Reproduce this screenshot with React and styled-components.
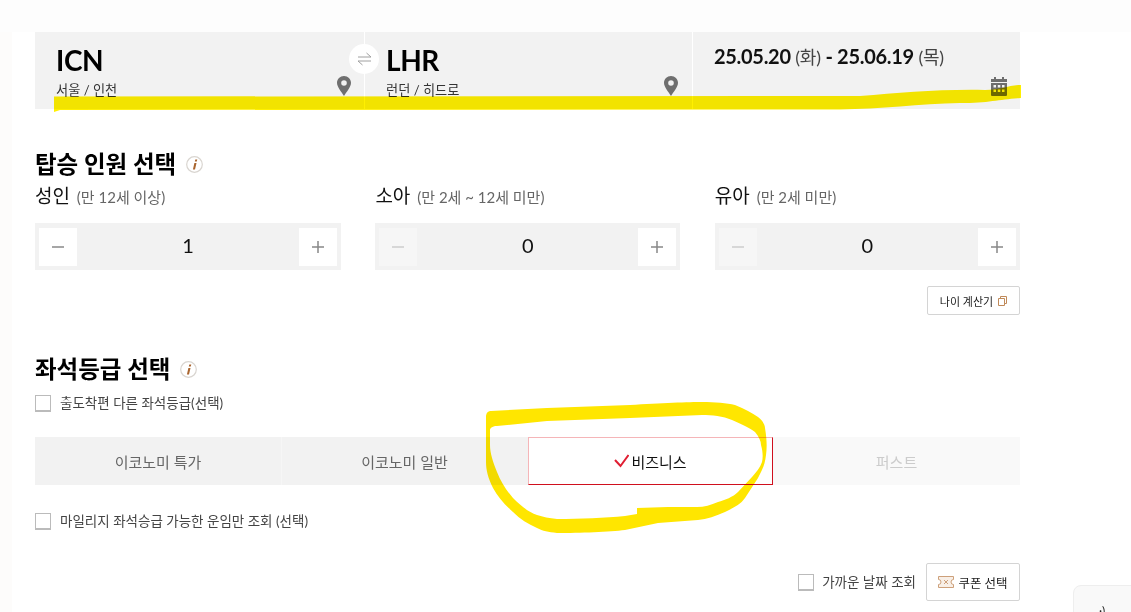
import React from "react";
import styled, { createGlobalStyle } from "styled-components";

const Global = createGlobalStyle`
  html, body { margin: 0; padding: 0; background: #fff; }
  body { font-family: Lato, "Noto Sans CJK KR", sans-serif; color: #111; overflow: hidden; }
  * { box-sizing: border-box; }
`;

const Viewport = styled.div`
  position: relative;
  width: 1131px;
  height: 612px;
  overflow: hidden;
  background: #fdfcfb;
`;
const TopStrip = styled.div`
  height: 32px;
  background: #fdfdfd;
`;
const Sheet = styled.main`
  height: 580px;
  margin-left: 12px;
  padding: 0 111px 0 23px;
  background: #fff;
`;
const SearchBar = styled.section`
  display: grid;
  grid-template-columns: 329px 328px 328px;
  height: 77px;
  background: #f2f2f2;
`;
const SearchCell = styled.div`
  position: relative;
  padding: 11px 0 0 21px;
  border-left: ${(p) => (p.$first ? "none" : "1.5px solid #fff")};
`;
const Code = styled.div`
  font-size: 28px;
  line-height: 34px;
  font-weight: 700;
  color: #000;
  letter-spacing: -0.4px;
`;
const City = styled.div`
  margin-top: 4px;
  font-size: 13.2px;
  line-height: 18px;
  color: #333;
`;
const DateLine = styled.div`
  font-size: 20px;
  line-height: 26px;
  font-weight: 700;
  color: #111;
  letter-spacing: -0.3px;
  white-space: nowrap;
`;
const Weekday = styled.span`
  font-size: 18px;
  font-weight: 400;
  color: #444;
  letter-spacing: -0.2px;
`;
const CornerIcon = styled.svg`
  position: absolute;
  right: ${(p) => p.$right}px;
  top: ${(p) => p.$top}px;
`;
const SwapBadge = styled.div`
  position: absolute;
  left: -16px;
  top: 12px;
  width: 30px;
  height: 30px;
  border-radius: 50%;
  background: #fff;
  display: flex;
  align-items: center;
  justify-content: center;
`;
const SectionTitle = styled.h2`
  display: flex;
  align-items: center;
  gap: 10px;
  margin: ${(p) => p.$top}px 0 0;
  font-size: 23.5px;
  line-height: 30px;
  font-weight: 700;
  color: #000;
`;
const PassengerGrid = styled.div`
  display: grid;
  grid-template-columns: 306px 305px 305px;
  column-gap: 34.4px;
  margin-top: 5px;
`;
const PassengerLabel = styled.div`
  height: 26px;
  font-size: 19px;
  line-height: 24px;
  color: #111;
  white-space: nowrap;
`;
const Hint = styled.span`
  margin-left: 2px;
  font-size: 15px;
  color: #666;
`;
const Stepper = styled.div`
  display: flex;
  align-items: center;
  justify-content: space-between;
  height: 47px;
  margin-top: 13px;
  padding: 0 4px;
  background: #f2f2f2;
`;
const StepButton = styled.div`
  display: flex;
  align-items: center;
  justify-content: center;
  width: 38px;
  height: 38px;
  background: ${(p) => (p.$disabled ? "#f6f6f6" : "#fff")};
  color: ${(p) => (p.$disabled ? "#ccc" : "#888")};
`;
const StepValue = styled.div`
  padding-bottom: 3px;
  font-size: 20px;
  color: #111;
`;
const ToolRow = styled.div`
  display: flex;
  justify-content: flex-end;
  margin-top: 16px;
`;
const SmallButton = styled.div`
  display: flex;
  align-items: center;
  justify-content: center;
  gap: ${(p) => p.$gap}px;
  width: ${(p) => p.$w}px;
  height: ${(p) => p.$h}px;
  background: #fff;
  border: 1px solid #d4d4d4;
  border-radius: 2px;
  font-size: ${(p) => p.$size}px;
  color: #222;
  white-space: nowrap;
`;
const CheckRow = styled.label`
  display: flex;
  align-items: center;
  gap: ${(p) => p.$gap || 9}px;
  margin-top: ${(p) => p.$top || 0}px;
  font-size: 13.5px;
  line-height: 18px;
  color: #444;
  white-space: nowrap;
`;
const Box = styled.span`
  flex: none;
  width: 16px;
  height: 17px;
  background: #fff;
  border: 1px solid #bbb;
  border-bottom-width: 2px;
`;
const Tabs = styled.div`
  display: grid;
  grid-template-columns: 246px 247px 245px 247px;
  height: 48px;
  margin-top: 25px;
  background: #f2f2f2;
`;
const Tab = styled.div`
  display: flex;
  align-items: center;
  justify-content: center;
  gap: 2px;
  font-size: 15px;
  color: ${(p) => (p.$active ? "#111" : p.$disabled ? "#ccc" : "#666")};
  background: ${(p) => (p.$active ? "#fff" : p.$disabled ? "#f9f9f9" : "#f2f2f2")};
  border-style: solid;
  border-width: ${(p) => (p.$active ? "1px" : "0")};
  border-color: #f5b5b8 #d0101e #d0101e #f5b5b8;
  box-shadow: ${(p) => (p.$second ? "inset 1px 0 0 #f6f6f6" : "none")};
`;
const FooterRow = styled.div`
  display: flex;
  align-items: center;
  justify-content: flex-end;
  gap: 10px;
  margin-top: 33px;
`;
const FloatingCard = styled.div`
  position: absolute;
  left: 1073px;
  top: 585px;
  width: 70px;
  height: 40px;
  padding: 18px 0 0 25px;
  background: #f9f9f9;
  border: 1px solid #eee;
  border-radius: 8px;
  font-size: 12px;
  line-height: 14px;
  color: #222;
`;
const Marker = styled.svg`
  position: absolute;
  left: 0;
  top: 0;
  pointer-events: none;
  mix-blend-mode: multiply;
`;

const Pin = ({ right, top }) => (
  <CornerIcon $right={right} $top={top} width="14" height="20" viewBox="0 0 14 20">
    <path
      fillRule="evenodd"
      fill="#6f6f6f"
      d="M7 0C3.1 0 0 3 0 6.8 0 11.2 4.6 16 7 20c2.4-4 7-8.800 7-13.200C14 3 10.900 0 7 0Zm0 4.200a2.800 2.800 0 1 1 0 5.600 2.800 2.800 0 0 1 0-5.600Z"
    />
  </CornerIcon>
);

const Calendar = () => (
  <CornerIcon $right={13} $top={45} width="16" height="19" viewBox="0 0 16 19">
    <path fill="#6d6d6d" d="M3 0h2v3H3zM11 0h2v3h-2zM0 2h16v3H0z" />
    <path
      fillRule="evenodd"
      fill="#6d6d6d"
      d="M0 6h16v12a1 1 0 0 1-1 1H1a1 1 0 0 1-1-1ZM2.500 8v2.500H5V8Zm4.300 0v2.500h2.500V8ZM11 8v2.500h2.500V8ZM2.500 12.500V15H5v-2.500Zm4.300 0V15h2.500v-2.500Zm4.200 0V15h2.500v-2.500Z"
    />
  </CornerIcon>
);

const Swap = () => (
  <svg width="15" height="14" viewBox="0 0 15 14" fill="none" stroke="#a0a0a0" strokeWidth="1">
    <path d="M1 5h13L9.500 1M14 9H1l4.500 4" />
  </svg>
);

const Info = () => (
  <svg width="17" height="17" viewBox="0 0 17 17">
    <circle cx="8.500" cy="8.500" r="7.800" fill="#fff" stroke="#d9d5d0" strokeWidth="1.200" />
    <path d="M9.300 3.500h2l-.5 2H8.800ZM8.400 7h2.100l-1.500 6.500H6.900Z" fill="#a9652f" />
  </svg>
);

const Minus = () => (
  <svg width="12" height="12" viewBox="0 0 12 12">
    <path d="M0 6h12" stroke="currentColor" strokeWidth="1.500" />
  </svg>
);
const Plus = () => (
  <svg width="12" height="12" viewBox="0 0 12 12">
    <path d="M0 6h12M6 0v12" stroke="currentColor" strokeWidth="1.500" />
  </svg>
);

const CopyIcon = () => (
  <svg width="9" height="10" viewBox="0 0 9 10" fill="none" stroke="#c08a5a" strokeWidth="1">
    <path d="M2.500 2.500V.5h6v7H7M.5 2.500h6v7h-6z" />
  </svg>
);

const Ticket = () => (
  <svg width="16" height="12" viewBox="0 0 16 12" fill="none" stroke="#cda07a" strokeWidth="1">
    <path fill="#f8efe7" d="M.5.500h15v3a2.500 2.500 0 0 0 0 5v3H.5v-3a2.500 2.500 0 0 0 0-5z" />
    <path d="M6 4l4 4M10 4l-4 4" />
  </svg>
);

const Check = () => (
  <svg width="15" height="14" viewBox="0 0 15 14" fill="none" stroke="#e01e32" strokeWidth="2">
    <path d="M1 6 6.500 12 14.500 1" />
  </svg>
);

const Stepper1 = ({ label, hint, value, minusDisabled }) => (
  <div>
    <PassengerLabel>
      {label} <Hint>{hint}</Hint>
    </PassengerLabel>
    <Stepper>
      <StepButton $disabled={minusDisabled}>
        <Minus />
      </StepButton>
      <StepValue>{value}</StepValue>
      <StepButton>
        <Plus />
      </StepButton>
    </Stepper>
  </div>
);

export default function App() {
  return (
    <>
      <Global />
      <Viewport>
        <TopStrip />
        <Sheet>
          <SearchBar>
            <SearchCell $first>
              <Code>ICN</Code>
              <City>서울 / 인천</City>
              <Pin right={13} top={44} />
            </SearchCell>
            <SearchCell>
              <SwapBadge>
                <Swap />
              </SwapBadge>
              <Code>LHR</Code>
              <City>런던 / 히드로</City>
              <Pin right={14} top={44} />
            </SearchCell>
            <SearchCell>
              <DateLine>
                25.05.20 <Weekday>(화)</Weekday> - 25.06.19 <Weekday>(목)</Weekday>
              </DateLine>
              <Calendar />
            </SearchCell>
          </SearchBar>

          <SectionTitle $top={40}>
            탑승 인원 선택 <Info />
          </SectionTitle>
          <PassengerGrid>
            <Stepper1 label="성인" hint="(만 12세 이상)" value="1" minusDisabled={false} />
            <Stepper1 label="소아" hint="(만 2세 ~ 12세 미만)" value="0" minusDisabled />
            <Stepper1 label="유아" hint="(만 2세 미만)" value="0" minusDisabled />
          </PassengerGrid>
          <ToolRow>
            <SmallButton $w={93} $h={29} $size={11} $gap={5}>
              나이 계산기 <CopyIcon />
            </SmallButton>
          </ToolRow>

          <SectionTitle $top={39}>
            좌석등급 선택 <Info />
          </SectionTitle>
          <CheckRow $top={10}>
            <Box /> 출도착편 다른 좌석등급(선택)
          </CheckRow>
          <Tabs>
            <Tab>이코노미 특가</Tab>
            <Tab $second>이코노미 일반</Tab>
            <Tab $active>
              <Check />
              비즈니스
            </Tab>
            <Tab $disabled>퍼스트</Tab>
          </Tabs>
          <CheckRow $top={27}>
            <Box /> 마일리지 좌석승급 가능한 운임만 조회 (선택)
          </CheckRow>
          <FooterRow>
            <CheckRow $gap={8}>
              <Box /> 가까운 날짜 조회
            </CheckRow>
            <SmallButton $w={94} $h={38} $size={12.5} $gap={4}>
              <Ticket /> 쿠폰 선택
            </SmallButton>
          </FooterRow>
        </Sheet>
        <FloatingCard>·)</FloatingCard>
        <Marker width="1131" height="612" viewBox="0 0 1131 612" fill="none">
          <path
            d="M54 96.500 L860 96 C900 93 940 89 985 90 C1000 90 1010 85 1021 85 L1021 98 C1000 99 990 103 960 103 C920 104 880 109 840 109.500 L60 110 L54 112 Z"
            fill="#fff000"
          />
          <path
            fillRule="evenodd"
            fill="#ffe600"
            d="M486 417 C486 413 488 411 491 411 L547 408 L630 405 C660 403 690 402 702 402 C715 402 727 403 735 405 C745 409 752 413 758 417 C763 421 765 425 765 428 C767 440 767 448 766 455 C765 465 762 470 758 478 L745 498 C740 505 733 508 725 512 C716 516 707 519 698 520 L658 523 L625 530 C610 532 580 533 557 533 C548 532 543 531 537 528 C528 524 520 519 513 512 C504 504 498 497 493 488 C488 478 486 470 486 462 Z M490 430 C490 428 493 426 497 426 L547 421 L630 418 L702 415 C712 415 723 416 732 420 C741 424 750 428 755 432 C759 437 761 441 761 445 C763 452 763 458 762 462 C760 468 756 472 752 477 L738 492 C733 497 725 500 718 502 C711 505 704 507 697 507 L668 507 L637 508 L637 514 L625 516 C605 518 580 519 557 519 C549 518 543 517 537 515 C528 512 520 505 513 498 C506 490 501 482 497 472 C493 462 490 453 490 445 Z"
          />
        </Marker>
      </Viewport>
    </>
  );
}
